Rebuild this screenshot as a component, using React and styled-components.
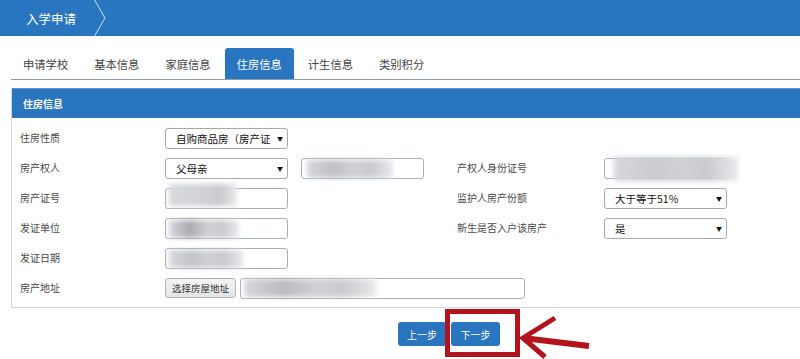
import React from "react";
import styled, { createGlobalStyle } from "styled-components";

const Global = createGlobalStyle`
  html, body { margin: 0; padding: 0; background: #fff; overflow: hidden; }
  body { font-family: "Noto Sans CJK SC", "Noto Sans", sans-serif; color: #444; }
  #root { width: 800px; height: 359px; overflow: hidden; }
`;

const BLUE = "#2a75bf";

const Page = styled.div`
  position: relative;
  width: 800px;
  height: 359px;
  overflow: hidden;
`;

const Header = styled.div`
  height: 36px;
  background: ${BLUE};
  display: flex;
  align-items: center;
  padding-left: 26px;
  gap: 16px;
`;

const Title = styled.div`
  color: #fff;
  font-size: 12.5px;
`;

const Tabs = styled.div`
  margin-top: 12px;
  margin-left: 11px;
  height: 31px;
  display: flex;
  align-items: stretch;
  border-bottom: 1px solid #8e9eac;
`;

const Tab = styled.div`
  display: flex;
  align-items: center;
  padding: 1px 12px 0;
  margin-right: 2px;
  font-size: 11.3px;
  color: ${(p) => (p.$active ? "#fff" : "#444")};
  background: ${(p) => (p.$active ? BLUE : "transparent")};
  border-radius: 3px 3px 0 0;
`;

const Panel = styled.div`
  margin: 8px -20px 0 11px;
  border: 1px solid #d8d8d8;
  border-top: none;
`;

const PanelHead = styled.div`
  height: 29px;
  background: ${BLUE};
  border-top: 1px solid #5d94cc;
  display: flex;
  align-items: center;
  padding-left: 11px;
  color: #fff;
  font-size: 10px;
  font-weight: 700;
`;

const Form = styled.div`
  display: grid;
  grid-template-columns: 145px 136px 156px 147px 123px;
  grid-auto-rows: 21px;
  row-gap: 9px;
  padding: 10px 0 8px 8px;
`;

const Label = styled.div`
  font-size: 10px;
  color: #4a4a4a;
  display: flex;
  align-items: center;
  margin-top: -3px;
  grid-column: ${(p) => p.$col || "1"};
  white-space: nowrap;
`;

const Select = styled.div`
  width: 123px;
  height: 21px;
  box-sizing: border-box;
  border: 1px solid #a9a9a9;
  border-radius: 3px;
  background: #fff;
  display: flex;
  align-items: center;
  justify-content: space-between;
  padding: 0 4px 0 10px;
  font-size: 10.5px;
  color: #111;
  overflow: hidden;
  white-space: nowrap;
  grid-column: ${(p) => p.$col || "2"};
`;

const Caret = styled.span`
  font-size: 6px;
  color: #111;
  margin-left: 2px;
`;

const Input = styled.div`
  width: ${(p) => p.$w || 123}px;
  height: 21px;
  box-sizing: border-box;
  border: 1px solid #a6b0bb;
  border-radius: 3px;
  background: #fff;
  display: flex;
  align-items: center;
  padding-left: 3px;
  grid-column: ${(p) => p.$col || "auto"};
`;

const Blur = styled.span`
  display: block;
  width: ${(p) => p.$w}px;
  height: ${(p) => p.$h || 18}px;
  margin-left: ${(p) => p.$x || 0}px;
  margin-top: ${(p) => p.$y || 0}px;
  background: linear-gradient(
    90deg,
    #d6d8dc 0%,
    #${(p) => p.$dark || "c4c6ca"} 30%,
    #cfd1d4 55%,
    #c8cacd 75%,
    #e9eaec 100%
  );
  filter: blur(2.5px);
  flex-shrink: 0;
`;

const AddrCell = styled.div`
  grid-column: 2 / 6;
  display: flex;
  gap: 4px;
  align-items: center;
  margin-top: -1px;
`;

const SmallBtn = styled.div`
  height: 20px;
  box-sizing: border-box;
  border: 1px solid #b4b4b4;
  border-radius: 3px;
  background: linear-gradient(#f4f4f4, #e4e4e4);
  font-size: 9.5px;
  color: #333;
  display: flex;
  align-items: center;
  padding: 0 6px;
  white-space: nowrap;
`;

const Footer = styled.div`
  display: flex;
  gap: 5px;
  padding-left: 398px;
  margin-top: 14px;
`;

const Btn = styled.div`
  width: ${(p) => p.$w}px;
  height: 24px;
  border-radius: 3px;
  background: ${BLUE};
  color: #fff;
  font-size: 10px;
  display: flex;
  align-items: center;
  justify-content: center;
`;

const RedBox = styled.div`
  position: absolute;
  left: 445px;
  top: 309px;
  width: 75px;
  height: 48px;
  box-sizing: border-box;
  border: 5px solid #b3131c;
`;

const Arrow = styled.svg`
  position: absolute;
  left: 515px;
  top: 310px;
`;

export default function App() {
  return (
    <Page>
      <Global />
      <Header>
        <Title>入学申请</Title>
        <svg width="16" height="36" viewBox="0 0 16 36">
          <polyline points="2,-1 13,18 2,37" fill="none" stroke="#cfe0f2" strokeWidth="1" />
        </svg>
      </Header>
      <Tabs>
        <Tab>申请学校</Tab>
        <Tab>基本信息</Tab>
        <Tab>家庭信息</Tab>
        <Tab $active>住房信息</Tab>
        <Tab>计生信息</Tab>
        <Tab>类别积分</Tab>
      </Tabs>
      <Panel>
        <PanelHead>住房信息</PanelHead>
        <Form>
          <Label>住房性质</Label>
          <Select>
            <span>自购商品房（房产证</span>
            <Caret>▼</Caret>
          </Select>

          <Label>房产权人</Label>
          <Select>
            <span>父母亲</span>
            <Caret>▼</Caret>
          </Select>
          <Input $col="3">
            <Blur $w={86} $x={2} $dark="bfc1c5" />
          </Input>
          <Label $col="4">产权人身份证号</Label>
          <Input $col="5">
            <Blur $w={124} $x={6} $h={24} $dark="c9cbce" />
          </Input>

          <Label>房产证号</Label>
          <Input $col="2">
            <Blur $w={68} $y={-8} $h={22} $dark="d4d6d9" />
          </Input>
          <Label $col="4">监护人房产份额</Label>
          <Select $col="5">
            <span>大于等于51%</span>
            <Caret>▼</Caret>
          </Select>

          <Label>发证单位</Label>
          <Input $col="2">
            <Blur $w={70} $dark="a9abaf" />
          </Input>
          <Label $col="4">新生是否入户该房产</Label>
          <Select $col="5">
            <span>是</span>
            <Caret>▼</Caret>
          </Select>

          <Label>发证日期</Label>
          <Input $col="2">
            <Blur $w={74} $dark="c2c4c8" />
          </Input>

          <Label>房产地址</Label>
          <AddrCell>
            <SmallBtn>选择房屋地址</SmallBtn>
            <Input $w={285}>
              <Blur $w={132} $dark="b9bbbf" />
            </Input>
          </AddrCell>
        </Form>
      </Panel>
      <Footer>
        <Btn $w={48}>上一步</Btn>
        <Btn $w={49}>下一步</Btn>
      </Footer>
      <RedBox />
      <Arrow width="80" height="50" viewBox="0 0 80 50">
        <polyline points="40,8 8,28 30,47" fill="none" stroke="#b3131c" strokeWidth="5" strokeLinejoin="miter" />
        <line x1="8" y1="28" x2="74" y2="36" stroke="#b3131c" strokeWidth="6" />
      </Arrow>
    </Page>
  );
}
